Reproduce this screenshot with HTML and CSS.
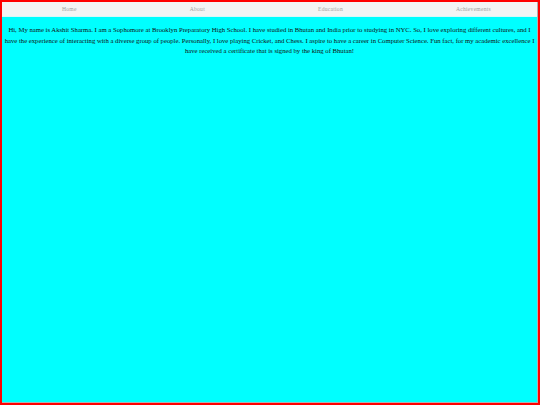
FILE: index.html
```html
<!DOCTYPE html>
<html>
<head>
<meta charset="utf-8">
<link rel="stylesheet" href="styles.css">
</head>
<body>
<div class="page">
  <nav class="nav">
    <a class="nav-link" href="#">Home</a>
    <a class="nav-link" href="#">About</a>
    <a class="nav-link" href="#">Education</a>
    <a class="nav-link" href="#">Achievements</a>
  </nav>
  <p class="intro">Hi, My name is Akshit Sharma. I am a Sophomore at Brooklyn Preparatory High School. I have studied in Bhutan and India prior to studying in NYC. So, I love exploring different cultures, and I have the experience of interacting with a diverse group of people. Personally, I love playing Cricket, and Chess. I aspire to have a career in Computer Science. Fun fact, for my academic excellence I have received a certificate that is signed by the king of Bhutan!</p>
</div>
</body>
</html>
```
FILE: styles.css
```css
html, body {
  margin: 0;
  padding: 0;
  height: 100%;
}
body {
  box-sizing: border-box;
  border: 2px solid #ff0000;
  background: #00ffff;
  font-family: "Liberation Serif", serif;
}
.page {
  box-sizing: border-box;
  height: 100%;
  border-right: 1px solid #b0b0b0;
  border-bottom: 1px solid #b0b0b0;
}
.nav {
  display: flex;
  justify-content: space-between;
  align-items: center;
  height: 14px;
  padding: 0 46px 0 60px;
  background: #f4f4f4;
  border-bottom: 1px solid #d8f8f8;
}
.nav-link {
  font-size: 5.6px;
  color: #a0a0a0;
  text-decoration: none;
  letter-spacing: 0.25px;
}
.intro {
  margin: 8px 0 0;
  padding: 0;
  font-size: 6.7px;
  line-height: 10.7px;
  text-align: center;
  color: #111111;
}
```
